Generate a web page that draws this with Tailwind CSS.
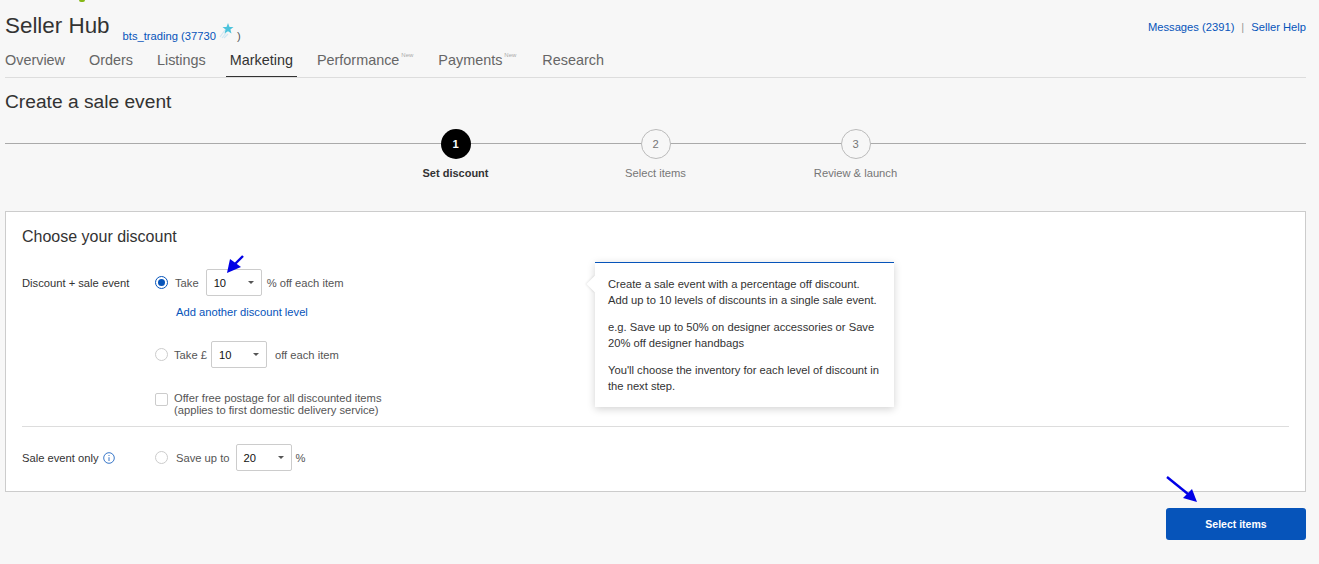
<!DOCTYPE html>
<html lang="en">
<head>
  <meta charset="UTF-8">
  <meta name="viewport" content="width=device-width, initial-scale=1.0">
  <title>Create a sale event</title>
  <script src="https://cdn.jsdelivr.net/npm/@tailwindcss/browser@4"></script>
</head>
<body class="bg-[#f7f7f7] font-['Liberation_Sans',Arial,sans-serif] text-[#333] h-[564px] overflow-hidden">
  <div class="relative pl-[5px] pr-[13px]">
    <!-- logo clipped by the top of the page -->
    <span class="absolute left-[79px] top-0 w-[6px] h-[2px] rounded-b-full bg-[#86b817]"></span>

    <!-- Header -->
    <div class="flex items-start justify-between h-[44px] pt-[14px]">
      <div class="flex items-start">
        <h1 class="text-[22.4px] leading-[24px] text-[#333]">Seller Hub</h1>
        <div class="relative ml-[13px] mt-[15px] text-[11.2px] leading-[14px] text-[#555] whitespace-nowrap">
          <span class="text-[#0654ba]">bts_trading</span> <span class="text-[#0654ba]">(37730</span>
          <svg class="inline-block align-top -mt-[7px] w-[16px] h-[17px]" viewBox="0 0 16 17">
            <path d="M1 15 L6 8 M3 16 L7 11 M5 16 L9 12" stroke="#cfe7f3" stroke-width="1.2" fill="none"/>
            <path d="M9 1 L10.5 4.9 L14.5 5.1 L11.4 7.6 L12.5 11.5 L9 9.3 L5.5 11.5 L6.6 7.6 L3.5 5.1 L7.5 4.9 Z" fill="#4cc3dc"/>
          </svg>
          <span class="-ml-[1px]">)</span>
        </div>
      </div>
      <div class="flex items-center text-[11.2px] leading-[14px] mt-[6px] text-[#0654ba]">
        <a>Messages (2391)</a>
        <span class="mx-[7px] text-[#999]">|</span>
        <a>Seller Help</a>
      </div>
    </div>

    <!-- Nav -->
    <nav class="flex h-[34px] border-b border-[#ddd] text-[14.4px] leading-[32px] text-[#666]">
      <a class="mr-[24px]">Overview</a>
      <a class="mr-[24px]">Orders</a>
      <a class="mr-[24px]">Listings</a>
      <a class="-ml-[4px] mr-[20px] px-[4px] h-[33px] border-b border-[#333] text-[#333]">Marketing</a>
      <a class="mr-[24px] flex">Performance<sup class="w-[15px] pl-[2px] text-[6px] leading-[6px] mt-[8px] top-0 text-[#aaa]">New</sup></a>
      <a class="mr-[25px] flex">Payments<sup class="w-[15px] pl-[2px] text-[6px] leading-[6px] mt-[8px] top-0 text-[#aaa]">New</sup></a>
      <a>Research</a>
    </nav>

    <h2 class="mt-[13px] text-[19.2px] leading-[22px] text-[#333]">Create a sale event</h2>

    <!-- Stepper -->
    <div class="relative mt-[16px] h-[64px]">
      <div class="absolute left-0 right-0 top-[14px] h-px bg-[#aaa]"></div>
      <ol class="relative flex justify-center text-[11.2px] leading-[14px] text-center">
        <li class="w-[200px] flex flex-col items-center font-bold text-[#333]">
          <span class="w-[30px] h-[30px] rounded-full bg-black text-white flex items-center justify-center">1</span>
          <span class="mt-[7px] text-[11px]">Set discount</span>
        </li>
        <li class="w-[200px] flex flex-col items-center text-[#767676]">
          <span class="w-[30px] h-[30px] rounded-full bg-[#f7f7f7] border border-[#bbb] flex items-center justify-center">2</span>
          <span class="mt-[7px]">Select items</span>
        </li>
        <li class="w-[200px] flex flex-col items-center text-[#767676]">
          <span class="w-[30px] h-[30px] rounded-full bg-[#f7f7f7] border border-[#bbb] flex items-center justify-center">3</span>
          <span class="mt-[7px]">Review &amp; launch</span>
        </li>
      </ol>
    </div>

    <!-- Card -->
    <section class="relative mt-[18px] h-[281px] bg-white border border-[#ccc] px-[16px] pt-[15px] text-[11.2px] leading-[14px]">
      <h3 class="text-[16px] leading-[20px] text-[#333]">Choose your discount</h3>

      <div class="flex mt-[22px]">
        <div class="w-[133px] pt-[7px] text-[#333]">Discount + sale event</div>
        <div class="text-[#555]">
          <div class="flex items-center h-[27px]">
            <span class="w-[13px] h-[13px] rounded-full border border-[#0654ba] flex items-center justify-center"><span class="w-[7px] h-[7px] rounded-full bg-[#0654ba]"></span></span>
            <span class="ml-[7px]">Take</span>
            <div class="ml-[7px] w-[56px] h-[27px] bg-white border border-[#ccc] rounded-[2px] flex items-center justify-between pl-[7px] pr-[7px] text-[#111]">10<span class="w-0 h-0 border-x-[3px] border-x-transparent border-t-[3px] border-t-[#555]"></span></div>
            <span class="ml-[5px]">% off each item</span>
          </div>
          <a class="block ml-[21px] mt-[9px] text-[#0654ba]">Add another discount level</a>

          <div class="flex items-center h-[27px] mt-[22px]">
            <span class="w-[13px] h-[13px] rounded-full border border-[#ccc]"></span>
            <span class="ml-[6px]">Take £</span>
            <div class="ml-[4px] w-[56px] h-[27px] bg-white border border-[#ccc] rounded-[2px] flex items-center justify-between pl-[7px] pr-[7px] text-[#111]">10<span class="w-0 h-0 border-x-[3px] border-x-transparent border-t-[3px] border-t-[#555]"></span></div>
            <span class="ml-[8px]">off each item</span>
          </div>

          <div class="flex items-start mt-[24px]">
            <span class="w-[13px] h-[13px] mt-[1px] rounded-[2px] border border-[#ccc]"></span>
            <p class="ml-[6px] leading-[12px]">Offer free postage for all discounted items<br>(applies to first domestic delivery service)</p>
          </div>
        </div>
      </div>

      <div class="h-px bg-[#ddd] mt-[10px]"></div>

      <div class="flex items-center mt-[17px] h-[27px]">
        <div class="w-[133px] flex items-center text-[#333]">Sale event only
          <svg class="ml-[4px] w-[12px] h-[12px]" viewBox="0 0 12 12" fill="none" stroke="#0654ba" stroke-width="0.8"><circle cx="6" cy="6" r="5.3"/><path d="M6 5.2 V9 M6 3 V4"/></svg>
        </div>
        <span class="w-[13px] h-[13px] rounded-full border border-[#ccc]"></span>
        <span class="ml-[8px] text-[#555]">Save up to</span>
        <div class="ml-[6px] w-[56px] h-[27px] bg-white border border-[#ccc] rounded-[2px] flex items-center justify-between pl-[7px] pr-[7px] text-[#111]">20<span class="w-0 h-0 border-x-[3px] border-x-transparent border-t-[3px] border-t-[#555]"></span></div>
        <span class="ml-[4px] text-[#555]">%</span>
      </div>

      <!-- Tooltip -->
      <div class="absolute left-[589px] top-[50px] w-[299px] h-[145px] bg-white border-t border-[#0654ba] shadow-[0_2px_8px_rgba(0,0,0,0.18)] px-[13px] pt-[13px] text-[11.2px] leading-[16px] text-[#333]">
        <span class="absolute left-[-6px] top-[15px] w-[12px] h-[12px] rotate-45 bg-white shadow-[-1px_1px_2px_rgba(0,0,0,0.08)]"></span>
        <p class="relative">Create a sale event with a percentage off discount.<br>Add up to 10 levels of discounts in a single sale event.</p>
        <p class="relative mt-[11px]">e.g. Save up to 50% on designer accessories or Save 20% off designer handbags</p>
        <p class="relative mt-[11px]">You'll choose the inventory for each level of discount in the next step.</p>
      </div>
    </section>

    <!-- Footer -->
    <div class="flex justify-end mt-[16px]">
      <button class="w-[140px] h-[32px] pt-[1px] bg-[#0654ba] rounded-[3px] text-white font-bold text-[10.5px]">Select items</button>
    </div>

    <!-- Annotation arrows -->
    <svg class="absolute left-[222px] top-[252px] w-[26px] h-[24px]" viewBox="0 0 26 24" fill="#0000e6">
      <path d="M21 4 L13 12" stroke="#0000e6" stroke-width="2.4"/>
      <path d="M5 21 L8 7 L19 15 Z"/>
    </svg>
    <svg class="absolute left-[1164px] top-[472px] w-[38px] h-[34px]" viewBox="0 0 38 34" fill="#0000e6">
      <path d="M3 5 L24 22" stroke="#0000e6" stroke-width="2.4"/>
      <path d="M33 30 L28 17 L19 26 Z"/>
    </svg>
  </div>
</body>
</html>
